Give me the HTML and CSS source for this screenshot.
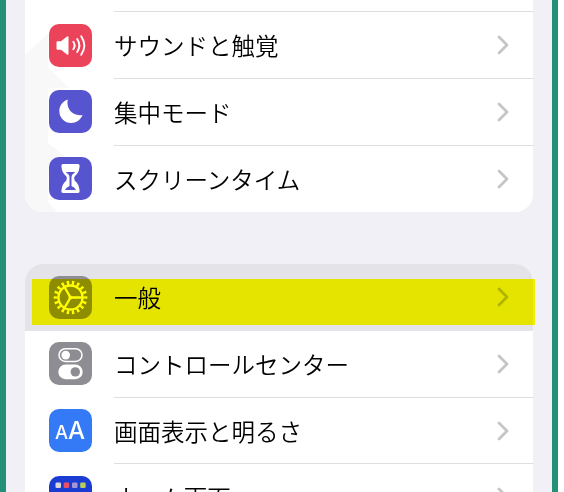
FILE: index.html
```html
<!DOCTYPE html>
<html lang="ja">
<head>
    <meta charset="UTF-8">
    <meta name="viewport" content="width=device-width, initial-scale=1.0">
    <title>設定</title>
    <link rel="stylesheet" href="styles.css">
</head>
<body>

<div class="phone">
    <!-- サウンド・集中モード -->
    <ul class="group group-top">
        <li class="row-end"></li>
        <li class="row">
            <span class="icon red">
                <svg viewBox="0 0 43 43">
                    <path d="M7.5 18.2 Q7.5 17.2 8.5 17.2 H12 L18 12.4 Q19.5 11.8 19.5 13.3 V29.7 Q19.5 31.2 18 30.6 L12 25.8 H8.5 Q7.5 25.8 7.5 24.8 Z" fill="#fff"/>
                    <path d="M24.3 17.8 Q27 21.5 24.3 25.2 M28.2 15 Q32.6 21.5 28.2 28 M32.2 12.2 Q38.4 21.5 32.2 30.8" fill="none" stroke="#fff" stroke-width="1.9" stroke-linecap="round"/>
                </svg>
            </span>
            <span class="label">サウンドと触覚</span>
            <svg class="chevron" viewBox="0 0 12 20"><path d="M2 2 L10 10 L2 18"/></svg>
        </li>
        <li class="row">
            <span class="icon indigo">
                <svg viewBox="0 0 43 43">
                    <path d="M18.8 9.6 C16.8 18 23 26.8 33.6 25 C31.4 30 27.2 33 22.2 33 C15.5 33 10.3 27.6 10.3 20.9 C10.3 15.8 13.9 11.2 18.8 9.6 Z" fill="#fff"/>
                </svg>
            </span>
            <span class="label">集中モード</span>
            <svg class="chevron" viewBox="0 0 12 20"><path d="M2 2 L10 10 L2 18"/></svg>
        </li>
        <li class="row">
            <span class="icon indigo">
                <svg viewBox="0 0 43 43">
                    <path d="M14 7 H29 Q31 7.2 30.5 10 Q30 16 25.8 19.3 Q24 21.5 25.8 23.7 Q30 27 30.5 33 Q31 35.8 29 36 H14 Q12 35.8 12.5 33 Q13 27 17.2 23.7 Q19 21.5 17.2 19.3 Q13 16 12.5 10 Q12 7.2 14 7 Z" fill="#fff"/>
                    <path d="M16.8 15 H26.2 Q22.7 17.5 22.5 20 V29 Q26 30.5 27 33 H16 Q17 30.5 20.5 29 V20 Q20.3 17.5 16.8 15 Z" fill="#5654cf"/>
                </svg>
            </span>
            <span class="label">スクリーンタイム</span>
            <svg class="chevron" viewBox="0 0 12 20"><path d="M2 2 L10 10 L2 18"/></svg>
        </li>
    </ul>

    <!-- 一般 -->
    <ul class="group">
        <li class="row selected">
            <span class="icon gray">
                <svg viewBox="0 0 43 43">
                    <circle class="teeth" cx="21.5" cy="21.5" r="14.8" pathLength="90"/>
                    <circle class="ring" cx="21.5" cy="21.5" r="12"/>
                    <path class="ring" d="M21.5 21.5 H33 M21.5 21.5 L15.7 11.5 M21.5 21.5 L15.7 31.5"/>
                    <circle cx="21.5" cy="21.5" r="2" fill="#fff"/>
                </svg>
            </span>
            <span class="label">一般</span>
            <svg class="chevron" viewBox="0 0 12 20"><path d="M2 2 L10 10 L2 18"/></svg>
            <span class="marker"></span>
        </li>
        <li class="row">
            <span class="icon gray">
                <svg viewBox="0 0 43 43">
                    <rect x="10" y="6.8" width="23" height="12.6" rx="6.3" fill="none" stroke="#fff" stroke-width="1.5"/>
                    <circle cx="16.7" cy="13.1" r="4.3" fill="#fff"/>
                    <rect x="9.3" y="22.6" width="24.4" height="14.6" rx="7.3" fill="#fff"/>
                    <circle cx="26.3" cy="29.9" r="4.7" fill="#8e8d93"/>
                </svg>
            </span>
            <span class="label">コントロールセンター</span>
            <svg class="chevron" viewBox="0 0 12 20"><path d="M2 2 L10 10 L2 18"/></svg>
        </li>
        <li class="row">
            <span class="icon blue"><span class="small-a">A</span><span class="big-a">A</span></span>
            <span class="label">画面表示と明るさ</span>
            <svg class="chevron" viewBox="0 0 12 20"><path d="M2 2 L10 10 L2 18"/></svg>
        </li>
        <li class="row">
            <span class="icon navy">
                <svg viewBox="0 0 43 43">
                    <rect x="6.5" y="6.5" width="5.5" height="5.5" rx="1.3" fill="#d9d7dc"/>
                    <rect x="14.7" y="6.5" width="5.5" height="5.5" rx="1.3" fill="#ea5068"/>
                    <rect x="23" y="6.5" width="5.5" height="5.5" rx="1.3" fill="#a497d6"/>
                    <rect x="31.2" y="6.5" width="5.5" height="5.5" rx="1.3" fill="#b5cf55"/>
                </svg>
            </span>
            <span class="label">ホーム画面</span>
            <svg class="chevron" viewBox="0 0 12 20"><path d="M2 2 L10 10 L2 18"/></svg>
        </li>
    </ul>
</div>

</body>
</html>
```

FILE: styles.css
```css
* {
    box-sizing: border-box;
}

body {
    margin: 0;
    height: 492px;
    overflow: hidden;
    background-color: #fff;
    font-family: "Noto Sans CJK JP", sans-serif;
    font-weight: 350;
    color: #000;
}

.phone {
    width: 558px;
    height: 492px;
    overflow: hidden;
    padding: 0 19px;
    background-color: #f2f0f7;
    border-left: 6px solid #249078;
    border-right: 6px solid #249078;
}

.group {
    position: relative;
    list-style: none;
    margin: 0 0 52px;
    padding: 0;
    width: 508px;
    background-color: #fff;
    border-radius: 18px;
}

.group-top {
    border-radius: 0 0 18px 18px;
}

/* 左側の淡い影 */
.group-top::before {
    content: "";
    position: absolute;
    inset: 0;
    background-color: #f8f8f8;
    border-radius: 0 0 18px 18px;
    clip-path: polygon(0 54px, 23px 34px, 23px 67px, 44px 88px, 23px 88px, 23px 143px, 44px 160px, 23px 175px, 23px 202px, 33px 212px, 0 212px);
}

.row,
.row-end {
    position: relative;
    display: flex;
    align-items: center;
    height: 66.7px;
    padding: 0 24px 0 23.5px;
}

.row-end {
    height: 11.9px;
}

/* 区切り線 */
.row + .row::before,
.row-end + .row::before {
    content: "";
    position: absolute;
    top: -0.7px;
    left: 89px;
    right: 0;
    height: 1px;
    background-color: #dedee0;
}

.selected + .row::before {
    display: none;
}

.selected {
    background-color: #e4e4e8;
    border-radius: 18px 18px 0 0;
}

.marker {
    position: absolute;
    top: 15px;
    left: 7px;
    width: 502.5px;
    height: 46px;
    background-color: #ffff00;
    mix-blend-mode: multiply;
}

.icon {
    display: flex;
    align-items: baseline;
    justify-content: center;
    width: 43px;
    height: 43px;
    border-radius: 10px;
    color: #fff;
}

.icon svg {
    width: 43px;
    height: 43px;
}

.red { background-color: #eb445a; }
.indigo { background-color: #5654cf; }
.gray { background-color: #8e8d93; }
.blue { background-color: #3479f6; }
.navy { background-color: #1b3cd2; }

.teeth,
.ring {
    fill: none;
    stroke: #fff;
    stroke-width: 2.3;
}

.teeth {
    stroke-width: 4;
    stroke-dasharray: 2.3 2.7;
    stroke-dashoffset: 1.15;
}

.small-a,
.big-a {
    font-family: Inter, sans-serif;
    font-weight: 500;
    line-height: 44px;
}

.small-a {
    font-size: 18.5px;
}

.big-a {
    font-size: 24px;
}

.label {
    flex: 1;
    margin-left: 22.5px;
    font-size: 23.5px;
    line-height: 34px;
    white-space: nowrap;
}

.chevron {
    width: 12px;
    height: 20px;
    fill: none;
    stroke: #c5c5c7;
    stroke-width: 2.8;
    stroke-linecap: round;
    stroke-linejoin: round;
}

.selected .chevron {
    stroke: #b2b2b5;
}
```
